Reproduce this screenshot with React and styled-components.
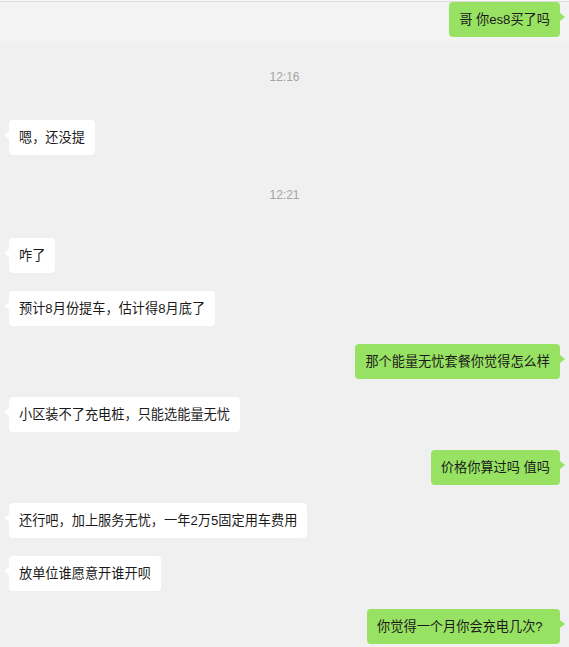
import styled, { createGlobalStyle } from "styled-components";

const GlobalStyle = createGlobalStyle`
    body {
        margin: 0;
        background-color: #f0f0f0;
        font-family: "Liberation Sans", "Noto Sans CJK SC", sans-serif;
    }
`

const ChatWindow = styled.main`
    min-height: 647px;
    background-color: #f0f0f0;
    border-top: 1px solid #f8f8f8;
    overflow: hidden;
`

const TopBorder = styled.div`
    height: 1px;
    background-color: #dcdcdc;
`

const MessageList = styled.section`
    display: flex;
    flex-direction: column;
`

const Row = styled.div`
    display: flex;
    justify-content: ${({ $mine }) => ($mine ? "flex-end" : "flex-start")};
    padding: ${({ $active }) => ($active ? "0 9px 6px" : "0 9px")};
    margin-bottom: ${({ $active }) => ($active ? "12px" : "18px")};
    background-color: ${({ $active }) => ($active ? "#f3f3f3" : "transparent")};
`

const Bubble = styled.div`
    position: relative;
    padding: 8px 10px;
    font-size: 13.2px;
    line-height: 19px;
    color: #1a1a1a;
    white-space: pre;
    border-radius: 4px;
    background-color: ${({ $mine }) => ($mine ? "#98e263" : "#ffffff")};

    &::before {
        content: "";
        position: absolute;
        top: 11px;
        ${({ $mine }) => ($mine ? "right: -5px;" : "left: -5px;")}
        border-top: 4px solid transparent;
        border-bottom: 4px solid transparent;
        ${({ $mine }) =>
            $mine ? "border-left: 5px solid #98e263;" : "border-right: 5px solid #ffffff;"}
    }
`

const TimeStamp = styled.div`
    text-align: center;
    font-size: 12px;
    line-height: 19px;
    color: #a5a5a5;
    margin: 13px 0 33px;
`

const messages = [
    { mine: true, text: "哥 你es8买了吗", active: true },
    { time: "12:16" },
    { text: "嗯，还没提" },
    { time: "12:21" },
    { text: "咋了" },
    { text: "预计8月份提车，估计得8月底了" },
    { mine: true, text: "那个能量无忧套餐你觉得怎么样" },
    { text: "小区装不了充电桩，只能选能量无忧" },
    { mine: true, text: "价格你算过吗 值吗" },
    { text: "还行吧，加上服务无忧，一年2万5固定用车费用" },
    { text: "放单位谁愿意开谁开呗" },
    { mine: true, text: "你觉得一个月你会充电几次?  " },
];

const App = () => {
    return (
        <>
            <GlobalStyle />
            <ChatWindow>
                <TopBorder />
                <MessageList>
                    {messages.map((msg, i) =>
                        msg.time ? (
                            <TimeStamp key={i}>{msg.time}</TimeStamp>
                        ) : (
                            <Row key={i} $mine={msg.mine} $active={msg.active}>
                                <Bubble $mine={msg.mine}>{msg.text}</Bubble>
                            </Row>
                        )
                    )}
                </MessageList>
            </ChatWindow>
        </>
    );
};
export default App;
